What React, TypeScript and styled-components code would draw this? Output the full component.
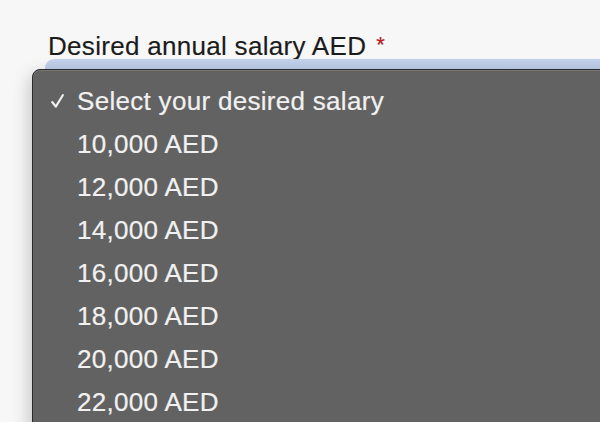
import React from 'react';
import styled, { createGlobalStyle } from 'styled-components';

const GlobalStyle = createGlobalStyle`
  html, body { margin:0; padding:0; background:#f7f7f7; overflow:hidden; }
  body { font-family:"Liberation Sans", Arial, sans-serif; }
`;

const Page = styled.div`
  width:600px;height:422px;box-sizing:border-box;
  padding:35px 0 0 48px;
  overflow:hidden;
`;

const Field = styled.div`
  display:flex;flex-direction:column;
`;

const Label = styled.label`
  font-size:26px;line-height:22px;color:#1b1b1b;letter-spacing:.3px;
  -webkit-text-stroke:.15px #1b1b1b;
`;

const Required = styled.span`
  color:#d3171b;font-size:22px;margin-left:10px;position:relative;top:-3px;
`;

const SelectBox = styled.div`
  position:relative;margin-left:-3px;height:44px;
  border-radius:9px 0 0 9px;
  background:linear-gradient(180deg,#c3d1ea 0%,#aabfe2 100%);
`;

const Menu = styled.ul`
  position:absolute;top:10px;left:-13px;width:600px;height:420px;
  margin:0;padding:10px 0 0 0;list-style:none;box-sizing:border-box;
  background:#626262;border:1px solid #2b2b2b;border-radius:8px;
  box-shadow:-2px 6px 18px rgba(0,0,0,.22), inset 0 1px 0 rgba(255,255,255,.12);
`;

const Option = styled.li<{ selected?: boolean }>`
  display:grid;grid-template-columns:26px auto;align-items:center;
  padding-left:18px;height:43px;line-height:43px;
  font-size:26px;color:#f1f1f1;letter-spacing:.3px;
  -webkit-text-stroke:.2px #f1f1f1;
`;

const Check = styled.svg`
  width:13px;height:14px;display:block;margin-top:-2px;
`;

const options = ['10,000 AED','12,000 AED','14,000 AED','16,000 AED','18,000 AED','20,000 AED','22,000 AED'];

export default function App() {
  return (
    <Page>
      <GlobalStyle />
      <Field>
        <Label>Desired annual salary AED<Required>*</Required></Label>
        <SelectBox>
          <Menu role="listbox">
            <Option selected>
              <Check viewBox="0 0 13 14" aria-hidden>
                <path d="M1.2 8 L4.8 12.6 L11.8 1.2" fill="none" stroke="#f1f1f1" strokeWidth="2.1" strokeLinecap="round" strokeLinejoin="round" />
              </Check>
              <span>Select your desired salary</span>
            </Option>
            {options.map(o => (
              <Option key={o}><span /><span>{o}</span></Option>
            ))}
          </Menu>
        </SelectBox>
      </Field>
    </Page>
  );
}
